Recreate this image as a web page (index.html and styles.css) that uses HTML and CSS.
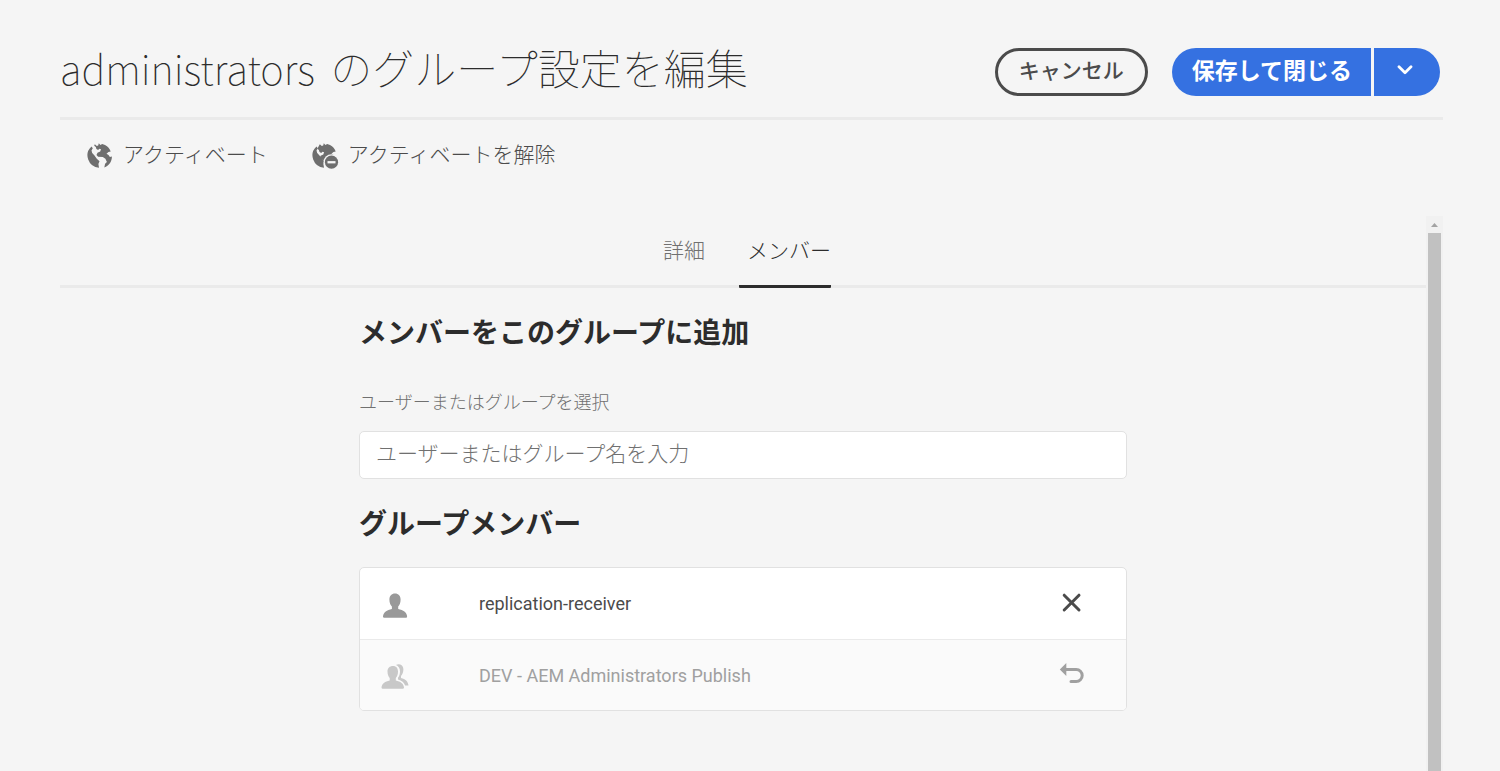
FILE: index.html
```
<!DOCTYPE html>
<html lang="ja">
<head>
<meta charset="utf-8">
<title>administrators のグループ設定を編集</title>
<link rel="stylesheet" href="styles.css">
</head>
<body>
<div class="page">
  <header class="header">
    <h1 class="title"><span class="group-name">administrators</span> のグループ設定を編集</h1>
    <div class="header-actions">
      <button type="button" class="btn btn-outline">キャンセル</button>
      <div class="split">
        <button type="button" class="btn btn-primary">保存して閉じる</button>
        <button type="button" class="btn btn-primary btn-more" aria-label="その他の保存オプション">
          <svg width="16" height="10" viewBox="0 0 16 10" fill="none" stroke="#fff" stroke-width="2.8" stroke-linecap="round" stroke-linejoin="round"><path d="M2 1.8 8 7.8 14 1.8"/></svg>
        </button>
      </div>
    </div>
  </header>

  <nav class="toolbar">
    <button type="button" class="tool">
      <svg class="tool-icon" width="28" height="28" viewBox="0 0 28 28" fill="#6e6e6e">
        <path d="M5.500 4.500A12.200 12.200 0 0 0 13 25.700L12.400 22l1.100-2.800-2.700-2.400-2.300-3.300L6.200 11l-.7-2.600 1.300-2.200z"/>
        <path d="m8.800 2.300 2 1.700 1.400-.4.600-2.300 1.600 1.600 1.800-.8 2.800.9c3 1.500 4.700 3.700 5.700 6.600l-2.200.5-2 1.700 2 1.200 1.400 2 2-.6c.1 5.100-2.900 9.200-7.600 11l.8-3.600 1.800-1.800-1.500-3.300-2.600-1.700-4.700-.3-1.600-1.800 1-2.200 2.700-1.200.8-2.300-1.600-.5-1.300 1.200-1.700-.8-.6-2.200-1.600-1.200z"/>
      </svg>
      <span>アクティベート</span>
    </button>
    <button type="button" class="tool">
      <svg class="tool-icon" width="28" height="28" viewBox="0 0 28 28" fill="#6e6e6e">
        <path d="M5.500 4.500A12.200 12.200 0 0 0 13 25.700L12.400 22l1.100-2.800-2.700-2.400-2.300-3.300L6.200 11l-.7-2.600 1.300-2.200z"/>
        <path d="m8.800 2.300 2 1.700 1.400-.4.600-2.300 1.600 1.600 1.800-.8 2.800.9c3 1.500 4.700 3.700 5.700 6.600l-2.200.5-2 1.700 2 1.200 1.400 2-3 2-6 1-4.700-.3-1.600-1.800 1-2.200 2.700-1.200.8-2.300-1.600-.5-1.300 1.200-1.700-.8-.6-2.200-1.600-1.200z"/>
        <circle cx="20.500" cy="20.200" r="8" fill="#f5f5f5"/>
        <circle cx="20.500" cy="20.200" r="6.600"/>
        <path fill="#f5f5f5" d="M16.500 19.100h8v2.300h-8z"/>
      </svg>
      <span>アクティベートを解除</span>
    </button>
  </nav>

  <div class="scroll">
    <main class="content">
      <div class="tabs" role="tablist">
        <button type="button" class="tab" role="tab" aria-selected="false">詳細</button>
        <button type="button" class="tab tab-active" role="tab" aria-selected="true">メンバー</button>
      </div>
      <section class="panel">
        <h2 class="heading">メンバーをこのグループに追加</h2>
        <label class="label" for="member">ユーザーまたはグループを選択</label>
        <input class="input" id="member" type="text" placeholder="ユーザーまたはグループ名を入力">
        <h2 class="heading">グループメンバー</h2>
        <ul class="list">
          <li class="row">
            <svg class="avatar" width="28" height="26" viewBox="0 0 28 26"><path fill="#999" d="M14 .5c3.500 0 5.600 2.400 5.600 5.900 0 3-1 5.600-2.400 7.200v2.300c5 1 8.700 3.200 8.900 7.600 0 .8-.3 1.200-1 1.200H3c-.8 0-1.100-.4-1-1.200.3-4.400 4-6.600 8.900-7.600v-2.300C9.400 12 8.400 9.400 8.400 6.400 8.400 2.900 10.600.5 14 .5z"/></svg>
            <span class="name">replication-receiver</span>
            <button type="button" class="action" aria-label="削除">
              <svg width="26" height="26" viewBox="0 0 26 26" fill="none" stroke="#4b4b4b" stroke-width="3" stroke-linecap="round"><path d="m5.200 5.200 14.800 14.800m0-14.800L5.200 20"/></svg>
            </button>
          </li>
          <li class="row row-removed">
            <svg class="avatar" width="28" height="26" viewBox="0 0 28 26" fill="#c8c8c8"><path d="M12 2c3.200 0 5 2.200 5 5.500 0 2.700-.8 5-2.200 6.500v2.400c4.600.9 7.900 3.100 8.200 7.200 0 .7-.3 1.100-.9 1.100H1.400c-.6 0-.9-.4-.9-1.100.3-4.100 3.600-6.300 8.200-7.200V14C7.400 12.500 6.500 10.200 6.500 7.500 6.500 4.200 8.700 2 12 2z"/><path d="M15 1c1-.6 2-.8 3-.7 3 .3 4.500 2.600 4.400 5.300-.1 2.700-1 5-2.400 6.300v2.200c4.400 1.100 7 3.400 7.500 7.300h-3.400c-.9-2.800-3.400-4.800-7.100-5.900v-1.800c1.300-1.600 2-3.800 2-6.300C19 4.500 17.600 2.100 15 1z"/></svg>
            <span class="name">DEV - AEM Administrators Publish</span>
            <button type="button" class="action" aria-label="元に戻す">
              <svg width="26" height="26" viewBox="0 0 26 26"><path fill="#a0a0a0" d="m.8 8.500 6.500-6.400v12.800z"/><path fill="none" stroke="#a0a0a0" stroke-width="3" stroke-linecap="round" d="M7 8.500h10.200a6 6 0 0 1 0 12H12"/></svg>
            </button>
          </li>
        </ul>
      </section>
    </main>
    <div class="scrollbar" aria-hidden="true">
      <svg class="scroll-arrow" width="17" height="17" viewBox="0 0 17 17"><path fill="#a3a3a3" d="M5 11 8.500 7 12 11z"/></svg>
      <div class="thumb"></div>
    </div>
  </div>
</div>
</body>
</html>
```
FILE: styles.css
```
* {
  box-sizing: border-box;
}

body {
  margin: 0;
  background: #f5f5f5;
  color: #4b4b4b;
  font-family: "Noto Sans CJK JP", sans-serif;
  font-size: 21px;
  font-weight: 300;
}

button {
  margin: 0;
  padding: 0;
  border: 0;
  background: none;
  color: inherit;
  font: inherit;
  white-space: nowrap;
  cursor: pointer;
}

svg {
  display: block;
  flex: none;
}

.page {
  display: flex;
  flex-direction: column;
  height: 100vh;
  padding: 35px 57px 0 60px;
}

.header {
  display: flex;
  align-items: flex-start;
  justify-content: space-between;
  padding: 0 3px 17px 0;
  border-bottom: 3px solid #eaeaea;
}

.title {
  margin: 0;
  color: #2c2c2c;
  font-size: 42px;
  font-weight: 100;
  line-height: 64px;
}

.group-name {
  margin-right: 6px;
  font-size: 40px;
}

.header-actions {
  display: flex;
  gap: 24px;
  padding-top: 13px;
}

.btn {
  height: 48px;
  border-radius: 24px;
  line-height: 44px;
}

.btn-outline {
  padding: 0 21px 6px;
  border: 3px solid #4b4b4b;
  font-weight: 500;
  line-height: 36px;
}

.split {
  display: flex;
  gap: 3px;
}

.btn-primary {
  padding: 0 19px 6px 20px;
  border-radius: 24px 0 0 24px;
  background: #3571e1;
  color: #fff;
  font-size: 23px;
  font-weight: 700;
  line-height: 42px;
}

.btn-more {
  display: flex;
  align-items: center;
  justify-content: center;
  width: 66px;
  padding: 0 4px 4px 0;
  border-radius: 0 24px 24px 0;
}

.toolbar {
  display: flex;
  flex: none;
  gap: 43px;
  height: 96px;
  padding: 17px 26px 0;
}

.tool {
  display: flex;
  align-items: center;
  gap: 9px;
  height: 32px;
  line-height: 32px;
}

.tool-icon {
  margin-top: 6px;
}

.scroll {
  display: flex;
  flex: 1;
  min-height: 0;
  overflow: hidden;
}

.content {
  flex: 1;
}

.tabs {
  display: flex;
  justify-content: center;
  gap: 34px;
  height: 72px;
  border-bottom: 3px solid #eaeaea;
}

.tab {
  height: 72px;
  padding: 0 0 4px 8px;
  border-bottom: 3px solid transparent;
  border-radius: 1px;
  color: #707070;
}

.tab-active {
  border-color: #2c2c2c;
  color: #2c2c2c;
}

.panel {
  display: flex;
  flex-direction: column;
  width: 768px;
  max-width: 100%;
  margin: 0 auto;
  padding-top: 23px;
}

.heading {
  margin: 0;
  color: #2c2c2c;
  font-size: 28px;
  font-weight: 700;
  line-height: 40px;
}

.label {
  margin: 35px 0 15px;
  color: #707070;
  font-size: 18px;
  line-height: 30px;
}

.input {
  width: 100%;
  height: 48px;
  margin-bottom: 23px;
  padding: 0 16px 6px;
  border: 1px solid #e1e1e1;
  border-radius: 5px;
  background: #fff;
  color: #4b4b4b;
  font: inherit;
}

.input::placeholder {
  color: #707070;
  opacity: 1;
}

.list {
  margin: 25px 0 0;
  padding: 0;
  overflow: hidden;
  border: 1px solid #e1e1e1;
  border-radius: 5px;
  background: #fff;
  list-style: none;
}

.row {
  display: flex;
  align-items: center;
  height: 71px;
  padding: 0 41px 0 21px;
  font-family: Roboto, "Noto Sans CJK JP", sans-serif;
  font-size: 18px;
  font-weight: 400;
}

.row-removed {
  border-top: 1px solid #eaeaea;
  background: #fafafa;
  color: #a0a0a0;
}

.avatar {
  margin: 4px 70px 0 0;
}

.name {
  flex: 1;
}

.action {
  margin-bottom: 2px;
}

.scrollbar {
  display: flex;
  flex-direction: column;
  width: 17px;
  background: #f1f1f1;
}

.thumb {
  flex: 1;
  margin: 0 2px;
  background: #c1c1c1;
}
```
